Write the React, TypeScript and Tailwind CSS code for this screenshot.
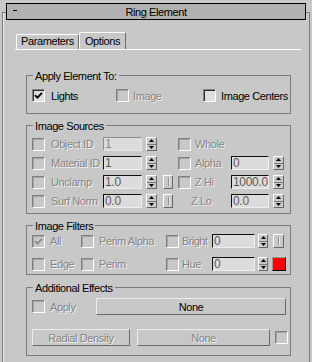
const UI = "[font-family:'Liberation_Sans',Arial,sans-serif] text-[11px] leading-[14px] tracking-[-0.4px] whitespace-nowrap";
const NUM = "[font-family:'Liberation_Sans',Arial,sans-serif] tracking-[-0.3px]";
const DIS = "text-[#858585] [text-shadow:1px_1px_0_#f2f2f2]";

function Box({ checked = false, disabled = false }: { checked?: boolean; disabled?: boolean }) {
  return (
    <span
      className={`flex h-[13px] w-[13px] shrink-0 items-center justify-center border border-t-[#808080] border-l-[#808080] border-b-white border-r-white ${
        disabled ? "bg-[#c8c8c8] shadow-[inset_1px_1px_0_#a4a4a4]" : "bg-[#dedede] shadow-[inset_1px_1px_0_#303030]"
      }`}
    >
      {checked && (
        <svg width="9" height="9" viewBox="0 0 9 9">
          <path d="M1 4.2 L3.4 6.6 L8 1.8" fill="none" stroke={disabled ? "#8a8a8a" : "#000"} strokeWidth="1.8" />
        </svg>
      )}
    </span>
  );
}

function Field({ value, className, disabled = false }: { value: string; className: string; disabled?: boolean }) {
  return (
    <div
      className={`${className} h-[14px] shrink-0 overflow-hidden border bg-[#dcdcdc] pl-[1px] text-[12px] leading-[12px] ${NUM} ${
        disabled
          ? "border-t-[#8c8c8c] border-l-[#8c8c8c] border-b-[#e6e6e6] border-r-[#e6e6e6] text-[#8a8a8a]"
          : "border-t-[#101010] border-l-[#101010] border-b-[#eeeeee] border-r-[#eeeeee] text-[#5a5a5a]"
      }`}
    >
      {value}
    </div>
  );
}

function Spin({ className }: { className: string }) {
  return (
    <div className={`${className} flex h-[14px] shrink-0 flex-col border border-t-white border-l-white border-b-[#6a6a6a] border-r-[#6a6a6a] bg-[#c8c8c8]`}>
      <div className="flex flex-1 items-center justify-center">
        <svg width="5" height="3" viewBox="0 0 5 3">
          <path d="M2.5 0 L5 3 L0 3 Z" fill="#000" />
        </svg>
      </div>
      <div className="h-px bg-[#7a7a7a]" />
      <div className="flex flex-1 items-center justify-center">
        <svg width="5" height="3" viewBox="0 0 5 3">
          <path d="M0 0 L5 0 L2.5 3 Z" fill="#000" />
        </svg>
      </div>
    </div>
  );
}

function Pipe({ className }: { className: string }) {
  return (
    <div className={`${className} flex h-[14px] shrink-0 items-center justify-center border border-t-white border-l-white border-b-[#6a6a6a] border-r-[#6a6a6a]`}>
      <div className="h-[8px] w-px bg-[#8a8a8a] shadow-[1px_0_0_#f0f0f0]" />
    </div>
  );
}

function Group({ title, className, children }: { title: string; className: string; children: React.ReactNode }) {
  return (
    <div className={`relative ml-[23px] w-[265px] border border-[#7c7c7c] ${className}`}>
      <span className="absolute left-[6px] top-[-7px] bg-[#c8c8c8] px-[2px] leading-[14px] text-black">{title}</span>
      {children}
    </div>
  );
}

export default function App() {
  return (
    <div className={`h-[362px] w-[312px] overflow-hidden bg-[#c8c8c8] ${UI}`}>
      <div className="ml-[2px] mt-[12px] h-[350px] w-[308px] border-l border-r border-t border-[#7c7c7c] shadow-[inset_1px_0_0_#ececec]">
        {/* rollout header */}
        <div className="relative mt-[-10px] ml-[3px] flex h-[17px] w-[300px] items-center justify-center border border-black bg-[#b1b1b1] text-black">
          <span className="absolute left-[6px] top-[6px] h-px w-[4px] bg-black" />
          Ring Element
        </div>

        {/* tabs */}
        <div className="ml-[12px] mt-[12px] flex h-[18px] w-[286px] items-end border-b border-white">
          <div className="ml-[1px] flex h-[15px] w-[63px] items-start justify-center rounded-tl-[2px] border-l border-t border-r border-l-white border-t-white border-r-[#6a6a6a] text-black">
            <span className="-mt-[1px]">Parameters</span>
          </div>
          <div className="flex h-[17px] w-[47px] items-start justify-center rounded-t-[2px] border-l border-t border-r border-l-white border-t-white border-r-[#6a6a6a] text-black">
            <span className="mt-[1px]">Options</span>
          </div>
        </div>

        {/* Apply Element To */}
        <Group title="Apply Element To:" className="mt-[25px] h-[39px] pt-[13px]">
          <div className="flex h-[13px] items-center pl-[5px]">
            <Box checked />
            <span className="ml-[6px] w-[65px] text-black">Lights</span>
            <Box disabled />
            <span className={`ml-[4px] w-[70px] ${DIS}`}>Image</span>
            <Box />
            <span className="ml-[5px] text-black">Image Centers</span>
          </div>
        </Group>

        {/* Image Sources */}
        <Group title="Image Sources" className="mt-[11px] h-[89px] pt-[11px]">
          <div className="flex flex-col gap-[5px] pl-[5px]">
            <div className="flex h-[14px] items-center">
              <div className="flex w-[146px] shrink-0 items-center">
                <Box disabled />
                <span className={`ml-[6px] w-[52px] shrink-0 ${DIS}`}>Object ID</span>
                <Field value="1" className="w-[39px]" disabled />
                <Spin className="ml-[4px] w-[11px]" />
              </div>
              <Box disabled />
              <span className={`ml-[4px] w-[36px] shrink-0 ${DIS}`}>Whole</span>
            </div>
            <div className="flex h-[14px] items-center">
              <div className="flex w-[146px] shrink-0 items-center">
                <Box disabled />
                <span className={`ml-[6px] w-[52px] shrink-0 ${DIS}`}>Material ID</span>
                <Field value="1" className="w-[39px]" />
                <Spin className="ml-[4px] w-[11px]" />
              </div>
              <Box disabled />
              <span className={`ml-[4px] w-[36px] shrink-0 ${DIS}`}>Alpha</span>
              <Field value="0" className="w-[38px]" />
              <Spin className="ml-[4px] w-[11px]" />
            </div>
            <div className="flex h-[14px] items-center">
              <div className="flex w-[146px] shrink-0 items-center">
                <Box disabled />
                <span className={`ml-[6px] w-[52px] shrink-0 ${DIS}`}>Unclamp</span>
                <Field value="1.0" className="w-[39px]" />
                <Spin className="ml-[4px] w-[11px]" />
                <Pipe className="ml-[6px] w-[10px]" />
              </div>
              <Box disabled />
              <span className={`ml-[4px] w-[36px] shrink-0 ${DIS}`}>Z Hi</span>
              <Field value="1000.0" className="w-[38px]" />
              <Spin className="ml-[4px] w-[11px]" />
            </div>
            <div className="flex h-[14px] items-center">
              <div className="flex w-[146px] shrink-0 items-center">
                <Box disabled />
                <span className={`ml-[6px] w-[52px] shrink-0 ${DIS}`}>Surf Norm</span>
                <Field value="0.0" className="w-[39px]" />
                <Spin className="ml-[4px] w-[11px]" />
                <Pipe className="ml-[6px] w-[10px]" />
              </div>
              <span className={`w-[53px] shrink-0 pl-[13px] ${DIS}`}>Z Lo</span>
              <Field value="0.0" className="w-[38px]" />
              <Spin className="ml-[4px] w-[11px]" />
            </div>
          </div>
        </Group>

        {/* Image Filters */}
        <Group title="Image Filters" className="mt-[11px] h-[50px] pt-[8px]">
          <div className="flex flex-col gap-[9px] pl-[5px]">
            <div className="flex h-[14px] items-center">
              <Box checked disabled />
              <span className={`ml-[5px] w-[31px] shrink-0 ${DIS}`}>All</span>
              <Box disabled />
              <span className={`ml-[5px] w-[67px] shrink-0 ${DIS}`}>Perim Alpha</span>
              <Box disabled />
              <span className={`ml-[3px] w-[30px] shrink-0 tracking-[-0.6px] ${DIS}`}>Bright</span>
              <Field value="0" className="w-[43px]" />
              <Spin className="ml-[3px] w-[10px]" />
              <Pipe className="ml-[5px] w-[11px]" />
            </div>
            <div className="flex h-[14px] items-center">
              <Box disabled />
              <span className={`ml-[5px] w-[31px] shrink-0 ${DIS}`}>Edge</span>
              <Box disabled />
              <span className={`ml-[5px] w-[67px] shrink-0 ${DIS}`}>Perim</span>
              <Box disabled />
              <span className={`ml-[3px] w-[30px] shrink-0 ${DIS}`}>Hue</span>
              <Field value="0" className="w-[43px]" />
              <Spin className="ml-[3px] w-[10px]" />
              <div className="ml-[4px] h-[14px] w-[14px] shrink-0 border border-t-[#9a9a9a] border-l-[#9a9a9a] border-b-black border-r-black bg-[#ff0000]" />
            </div>
          </div>
        </Group>

        {/* Additional Effects */}
        <Group title="Additional Effects" className="mt-[12px] h-[69px] pt-[10px]">
          <div className="flex flex-col gap-[14px] pl-[5px]">
            <div className="flex h-[17px] items-center">
              <Box disabled />
              <span className={`ml-[5px] w-[46px] shrink-0 ${DIS}`}>Apply</span>
              <div className="flex h-[17px] w-[190px] shrink-0 items-center justify-center border border-t-[#ececec] border-l-[#ececec] border-b-[#6a6a6a] border-r-[#6a6a6a] text-black">
                None
              </div>
            </div>
            <div className="flex h-[17px] items-center">
              <div className={`flex h-[17px] w-[98px] shrink-0 items-center justify-center border border-t-[#ececec] border-l-[#ececec] border-b-[#6a6a6a] border-r-[#6a6a6a] ${DIS}`}>
                Radial Density
              </div>
              <div className={`ml-[7px] flex h-[17px] w-[133px] shrink-0 items-center justify-center border border-t-[#ececec] border-l-[#ececec] border-b-[#6a6a6a] border-r-[#6a6a6a] ${DIS}`}>
                None
              </div>
              <span className="ml-[5px]">
                <Box disabled />
              </span>
            </div>
          </div>
        </Group>
      </div>
    </div>
  );
}
